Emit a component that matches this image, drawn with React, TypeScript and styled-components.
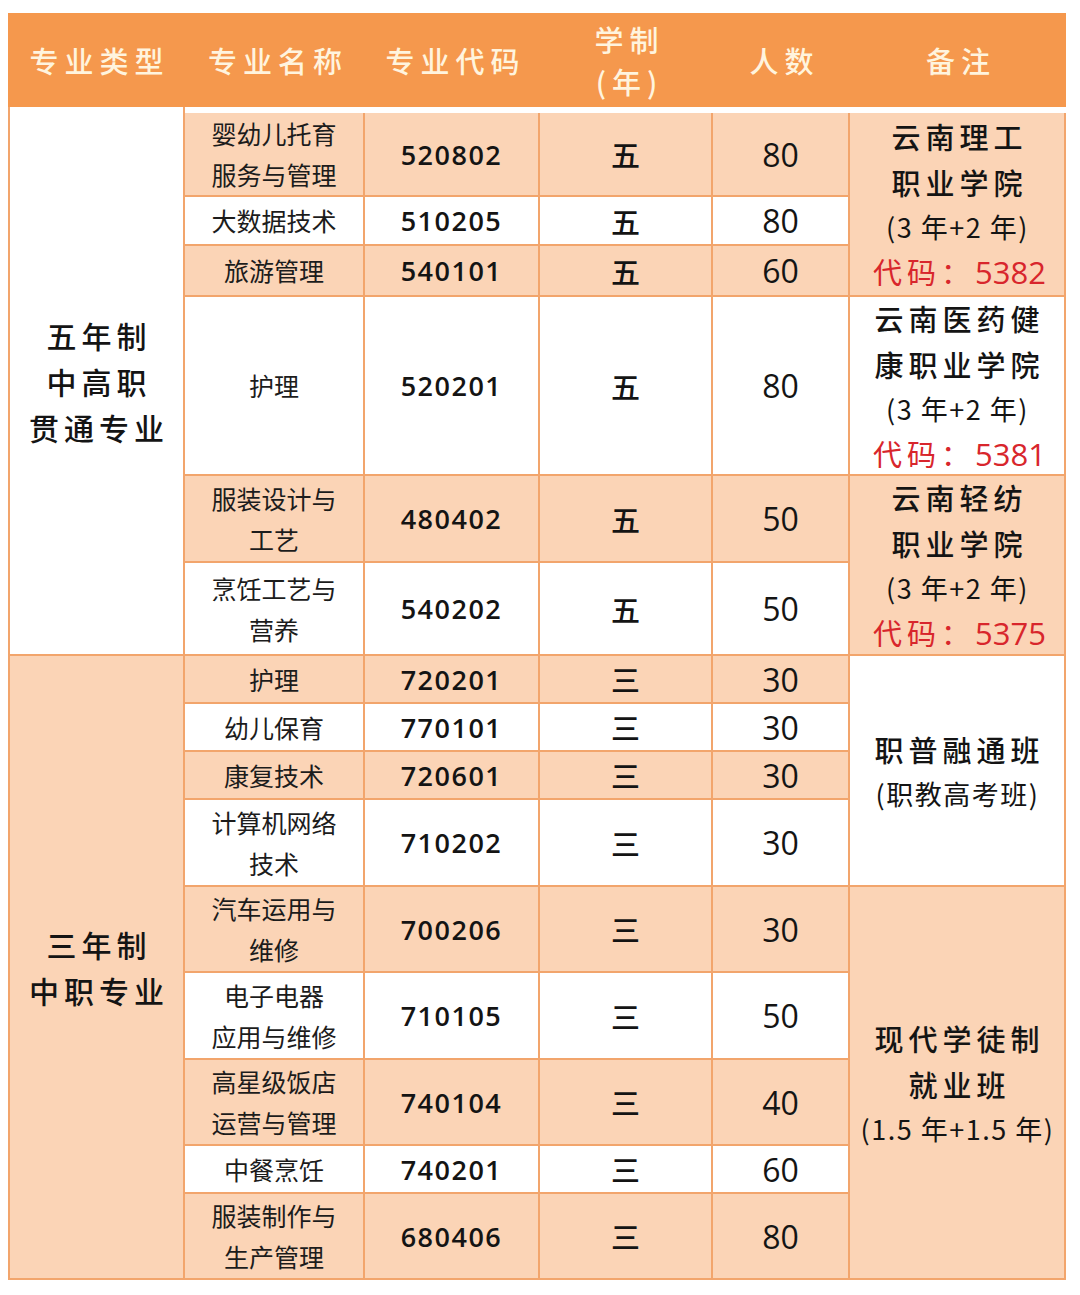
import React from 'react'
import styled, {createGlobalStyle, css} from 'styled-components'

const GlobalStyle = createGlobalStyle`
    body {
        margin: 0;
        background: #ffffff;
        font-family: "Noto Sans CJK SC", "Noto Sans", sans-serif;
    }
`

const LINE = '#f2a56c'
const PEACH = '#fbd4b6'
const COLS = '175px 180px 175px 173px 137px 216px'

const Page = styled.div`
    padding: 13px 0 15px 8px;
    width: 1058px;
`

const Header = styled.div`
    display: grid;
    grid-template-columns: 177px 180px 175px 173px 137px 216px;
    height: 94px;
    background: #f5984d;
`

const HeadCell = styled.div`
    display: flex;
    flex-direction: column;
    align-items: center;
    justify-content: center;
    color: #fff4de;
    font-size: 29px;
    font-weight: 500;
    line-height: 42px;
    letter-spacing: 6px;
    padding-left: 6px;
`

const Body = styled.div`
    display: grid;
    grid-template-columns: ${COLS};
    grid-template-rows: 84px 49px 51px 179px 87px 93px 48px 48px 48px 87px 86px 87px 86px 48px 86px;
    border-left: 2px solid ${LINE};
    padding-top: 6px;
`

type Tone = 'peach' | 'white'

const Cell = styled.div<{$tone: Tone; $span?: number; $first?: boolean}>`
    display: flex;
    flex-direction: column;
    align-items: center;
    justify-content: center;
    text-align: center;
    box-sizing: border-box;
    background: ${p => p.$tone === 'peach' ? PEACH : '#ffffff'};
    border-right: 2px solid ${LINE};
    border-bottom: 2px solid ${LINE};
    grid-row: span ${p => p.$span || 1};
    ${p => p.$first && css`
        margin-top: -6px;
    `}
`

const TypeText = styled.div`
    font-size: 30px;
    line-height: 46px;
    font-weight: 500;
    letter-spacing: 5px;
    padding-left: 5px;
    color: #141414;
`

const NameText = styled.div`
    font-size: 25px;
    line-height: 41px;
    color: #1c1c1c;
`

const CodeText = styled.div`
    font-family: "Open Sans", "Noto Sans", sans-serif;
    font-size: 27px;
    font-weight: 600;
    letter-spacing: 1.5px;
    color: #141414;
`

const YearText = styled.div`
    font-size: 29px;
    font-weight: 500;
    color: #141414;
`

const CountText = styled.div`
    font-family: "Open Sans", "Noto Sans", sans-serif;
    font-size: 32px;
    color: #141414;
`

const NoteLine = styled.div<{$red?: boolean; $tight?: boolean}>`
    font-size: ${p => p.$tight ? '27px' : '29px'};
    line-height: ${p => p.$tight ? '43px' : '46px'};
    font-weight: ${p => p.$tight || p.$red ? 400 : 500};
    letter-spacing: ${p => p.$tight ? '1.5px' : '5px'};
    padding-left: ${p => p.$tight ? '1px' : '5px'};
    color: ${p => p.$red ? '#d8262c' : '#141414'};
    white-space: nowrap;
`

const RedNum = styled.span`
    font-family: "Open Sans", "Noto Sans", sans-serif;
    letter-spacing: 0;
    font-size: 31px;
`

type Note = {span: number; tone: Tone; lines: {text: string; red?: boolean; tight?: boolean; num?: string}[]}
type Group = {span: number; tone: Tone; lines: string[]}
type Row = {name: string[]; code: string; years: string; count: string; tone: Tone; group?: Group; note?: Note}

const rows: Row[] = [
    {name: ['婴幼儿托育', '服务与管理'], code: '520802', years: '五', count: '80', tone: 'peach',
        group: {span: 6, tone: 'white', lines: ['五年制', '中高职', '贯通专业']},
        note: {span: 3, tone: 'peach', lines: [{text: '云南理工'}, {text: '职业学院'}, {text: '(3 年+2 年)', tight: true}, {text: '代码：', red: true, num: '5382'}]}},
    {name: ['大数据技术'], code: '510205', years: '五', count: '80', tone: 'white'},
    {name: ['旅游管理'], code: '540101', years: '五', count: '60', tone: 'peach'},
    {name: ['护理'], code: '520201', years: '五', count: '80', tone: 'white',
        note: {span: 1, tone: 'white', lines: [{text: '云南医药健'}, {text: '康职业学院'}, {text: '(3 年+2 年)', tight: true}, {text: '代码：', red: true, num: '5381'}]}},
    {name: ['服装设计与', '工艺'], code: '480402', years: '五', count: '50', tone: 'peach',
        note: {span: 2, tone: 'peach', lines: [{text: '云南轻纺'}, {text: '职业学院'}, {text: '(3 年+2 年)', tight: true}, {text: '代码：', red: true, num: '5375'}]}},
    {name: ['烹饪工艺与', '营养'], code: '540202', years: '五', count: '50', tone: 'white'},
    {name: ['护理'], code: '720201', years: '三', count: '30', tone: 'peach',
        group: {span: 9, tone: 'peach', lines: ['三年制', '中职专业']},
        note: {span: 4, tone: 'white', lines: [{text: '职普融通班'}, {text: '(职教高考班)', tight: true}]}},
    {name: ['幼儿保育'], code: '770101', years: '三', count: '30', tone: 'white'},
    {name: ['康复技术'], code: '720601', years: '三', count: '30', tone: 'peach'},
    {name: ['计算机网络', '技术'], code: '710202', years: '三', count: '30', tone: 'white'},
    {name: ['汽车运用与', '维修'], code: '700206', years: '三', count: '30', tone: 'peach',
        note: {span: 5, tone: 'peach', lines: [{text: '现代学徒制'}, {text: '就业班'}, {text: '(1.5 年+1.5 年)', tight: true}]}},
    {name: ['电子电器', '应用与维修'], code: '710105', years: '三', count: '50', tone: 'white'},
    {name: ['高星级饭店', '运营与管理'], code: '740104', years: '三', count: '40', tone: 'peach'},
    {name: ['中餐烹饪'], code: '740201', years: '三', count: '60', tone: 'white'},
    {name: ['服装制作与', '生产管理'], code: '680406', years: '三', count: '80', tone: 'peach'},
]

function App() {
    return <Page>
        <GlobalStyle/>
        <Header>
            <HeadCell>专业类型</HeadCell>
            <HeadCell>专业名称</HeadCell>
            <HeadCell>专业代码</HeadCell>
            <HeadCell><div>学制</div><div>(年)</div></HeadCell>
            <HeadCell>人数</HeadCell>
            <HeadCell>备注</HeadCell>
        </Header>
        <Body>
            {rows.map((r, i) => <React.Fragment key={i}>
                {r.group && <Cell $tone={r.group.tone} $span={r.group.span} $first={i === 0}>
                    {r.group.lines.map(l => <TypeText key={l}>{l}</TypeText>)}
                </Cell>}
                <Cell $tone={r.tone}>{r.name.map(n => <NameText key={n}>{n}</NameText>)}</Cell>
                <Cell $tone={r.tone}><CodeText>{r.code}</CodeText></Cell>
                <Cell $tone={r.tone}><YearText>{r.years}</YearText></Cell>
                <Cell $tone={r.tone}><CountText>{r.count}</CountText></Cell>
                {r.note && <Cell $tone={r.note.tone} $span={r.note.span}>
                    {r.note.lines.map(l => <NoteLine key={l.text} $red={l.red} $tight={l.tight}>
                        {l.text}{l.num && <RedNum>{l.num}</RedNum>}
                    </NoteLine>)}
                </Cell>}
            </React.Fragment>)}
        </Body>
    </Page>
}

export default App
